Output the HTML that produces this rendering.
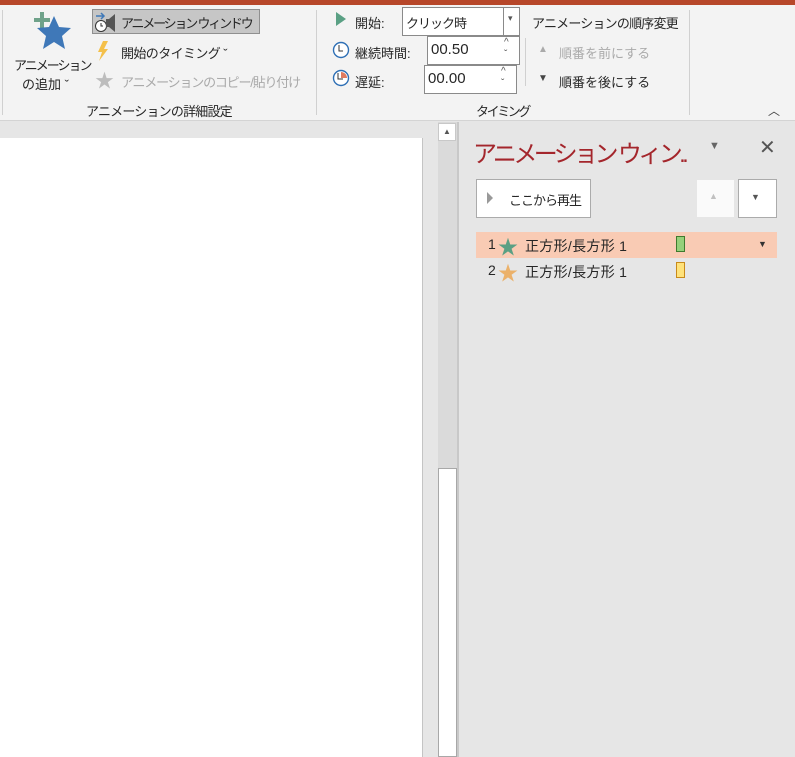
<!DOCTYPE html><html><head><meta charset="utf-8"><style>
body{margin:0;width:795px;height:757px;overflow:hidden;background:#e6e6e6;font-family:"Liberation Sans","Noto Sans CJK JP",sans-serif;font-size:13px;color:#262626;position:relative}
.a{position:absolute;white-space:nowrap}
.box{position:absolute;background:#fff;border:1px solid #8a8a8a;box-sizing:border-box}
</style></head><body>
<div class="a" style="left:0;top:0;width:795px;height:5px;background:#b7472a"></div>
<div class="a" style="left:0;top:5px;width:795px;height:115px;background:#f3f3f3;border-bottom:1px solid #d4d4d4"></div>
<div class="a" style="left:2px;top:10px;width:1px;height:105px;background:#d0d0d0"></div>
<div class="a" style="left:316px;top:10px;width:1px;height:105px;background:#d0d0d0"></div>
<div class="a" style="left:689px;top:10px;width:1px;height:105px;background:#d0d0d0"></div>
<div class="a" style="left:525px;top:38px;width:1px;height:48px;background:#d0d0d0"></div>
<!-- add animation -->
<svg class="a" style="left:30px;top:8px" width="45" height="44"><path d="M10 4h4v6h6v4h-6v6h-4v-6H4v-4h6z" fill="#6fa28a"/><path d="M24 8l5 11 12 1-9 8 3 13-11-7-11 7 3-13-9-8 12-1z" fill="#3f78b8"/></svg>
<div class="a" style="left:14px;top:55px;letter-spacing:-2px">アニメーション</div>
<div class="a" style="left:22px;top:74px">の追加 ˇ</div>
<div class="a" style="left:92px;top:9px;width:168px;height:25px;background:#c6c6c6;border:1px solid #8f8f8f;box-sizing:border-box"></div>
<svg class="a" style="left:94px;top:10px" width="24" height="24"><circle cx="7" cy="16" r="5.5" fill="#fff" stroke="#333"/><path d="M7 13v3h2" stroke="#333" fill="none"/><path d="M12 9h3l6-5v18l-6-5h-3z" fill="#555"/><path d="M2 6h7M7 3l3 3-3 3" stroke="#3f78b8" fill="none" stroke-width="1.5"/></svg>
<div class="a" style="left:121px;top:13px;letter-spacing:-2.2px">アニメーション ウィンドウ</div>
<svg class="a" style="left:97px;top:41px" width="12" height="20"><path d="M6 0h5L7 8h4L2 20 5 11H1z" fill="#f4c04a"/></svg>
<div class="a" style="left:121px;top:43px;letter-spacing:-0.6px">開始のタイミング ˇ</div>
<div class="a" style="left:95px;top:66px;color:#bdbdbd;font-size:19px">★</div>
<div class="a" style="left:121px;top:72px;color:#aaa;letter-spacing:-1.2px">アニメーションのコピー/貼り付け</div>
<div class="a" style="left:86px;top:101px;letter-spacing:-0.8px">アニメーションの詳細設定</div>
<!-- timing -->
<svg class="a" style="left:335px;top:12px" width="12" height="14"><path d="M1 0l10 7-10 7z" fill="#5aa084"/></svg>
<div class="a" style="left:355px;top:13px">開始:</div>
<div class="box" style="left:402px;top:7px;width:118px;height:29px"></div>
<div class="a" style="left:503px;top:8px;width:1px;height:27px;background:#8a8a8a"></div>
<div class="a" style="left:508px;top:13px;font-size:9px;color:#555">▾</div>
<div class="a" style="left:406px;top:13px;letter-spacing:-1px">クリック時</div>
<svg class="a" style="left:332px;top:41px" width="18" height="18"><circle cx="9" cy="9" r="7.5" fill="#fff" stroke="#2e6fb5" stroke-width="1.4"/><path d="M7 4v6h4" stroke="#333" fill="none"/></svg>
<div class="a" style="left:355px;top:43px">継続時間:</div>
<div class="box" style="left:427px;top:36px;width:93px;height:29px"></div>
<div class="a" style="left:431px;top:41px;font-size:15px">00.50</div>
<div class="a" style="left:504px;top:37px;font-size:10px;color:#555;line-height:12px">^<br>ˇ</div>
<svg class="a" style="left:332px;top:69px" width="18" height="18"><circle cx="9" cy="9" r="7.5" fill="#fff" stroke="#2e6fb5" stroke-width="1.4"/><path d="M9 9V3a6 6 0 0 1 6 6z" fill="#e07a5f"/><path d="M6 4v6h5" stroke="#333" fill="none"/></svg>
<div class="a" style="left:355px;top:72px">遅延:</div>
<div class="box" style="left:424px;top:65px;width:93px;height:29px"></div>
<div class="a" style="left:428px;top:70px;font-size:15px">00.00</div>
<div class="a" style="left:501px;top:66px;font-size:10px;color:#555;line-height:12px">^<br>ˇ</div>
<div class="a" style="left:476px;top:101px;letter-spacing:-2.4px">タイミング</div>
<div class="a" style="left:532px;top:13px;letter-spacing:-0.8px">アニメーションの順序変更</div>
<div class="a" style="left:538px;top:44px;color:#aaa;font-size:10px">▲</div>
<div class="a" style="left:559px;top:43px;color:#aaa">順番を前にする</div>
<div class="a" style="left:538px;top:73px;color:#444;font-size:10px">▼</div>
<div class="a" style="left:559px;top:72px">順番を後にする</div>
<div class="a" style="left:768px;top:102px;color:#444;font-size:12px">︿</div>
<!-- slide -->
<div class="a" style="left:0;top:138px;width:422px;height:619px;background:#fff;border-right:1px solid #c4c4c4"></div>
<div class="a" style="left:438px;top:122px;width:19px;height:635px;background:#dadada"></div>
<div class="a" style="left:438px;top:123px;width:18px;height:18px;background:#fff;border:1px solid #c8c8c8;box-sizing:border-box;font-size:8px;text-align:center;line-height:16px;color:#555">▲</div>
<div class="a" style="left:438px;top:468px;width:19px;height:289px;background:#fff;border:1px solid #a8a8a8;box-sizing:border-box"></div>
<div class="a" style="left:457px;top:122px;width:2px;height:635px;background:#c8c8c8"></div>
<!-- pane -->
<div class="a" style="left:473px;top:134px;font-size:24px;color:#a4262c;letter-spacing:-3.6px">アニメーション ウィン..</div>
<div class="a" style="left:709px;top:140px;font-size:11px;color:#666">▼</div>
<div class="a" style="left:759px;top:135px;font-size:20px;color:#555">✕</div>
<div class="box" style="left:476px;top:179px;width:115px;height:39px;border-color:#ababab"></div>
<svg class="a" style="left:486px;top:192px" width="8" height="12"><path d="M1 0l6 6-6 6z" fill="#999"/></svg>
<div class="a" style="left:509px;top:190px;letter-spacing:-1px">ここから再生</div>
<div class="a" style="left:697px;top:180px;width:37px;height:37px;background:#fafafa"></div>
<div class="a" style="left:709px;top:191px;font-size:9px;color:#c0c0c0">▲</div>
<div class="box" style="left:738px;top:179px;width:39px;height:39px;border-color:#ababab"></div>
<div class="a" style="left:751px;top:192px;font-size:9px;color:#555">▼</div>
<div class="a" style="left:476px;top:232px;width:301px;height:26px;background:#f9cbb4"></div>
<div class="a" style="left:488px;top:236px;font-size:14px">1</div>
<div class="a" style="left:498px;top:231px;font-size:20px;color:#5aa084">★</div>
<div class="a" style="left:525px;top:236px;font-size:14px;letter-spacing:0.3px">正方形/長方形 1</div>
<div class="a" style="left:676px;top:236px;width:9px;height:16px;background:#95d07a;border:1px solid #3f7a2e;box-sizing:border-box"></div>
<div class="a" style="left:758px;top:239px;font-size:9px;color:#333">▼</div>
<div class="a" style="left:488px;top:262px;font-size:14px">2</div>
<div class="a" style="left:498px;top:257px;font-size:20px;color:#ebb16a">★</div>
<div class="a" style="left:525px;top:262px;font-size:14px;letter-spacing:0.3px">正方形/長方形 1</div>
<div class="a" style="left:676px;top:262px;width:9px;height:16px;background:#ffe27a;border:1px solid #c88a1a;box-sizing:border-box"></div>
</body></html>
